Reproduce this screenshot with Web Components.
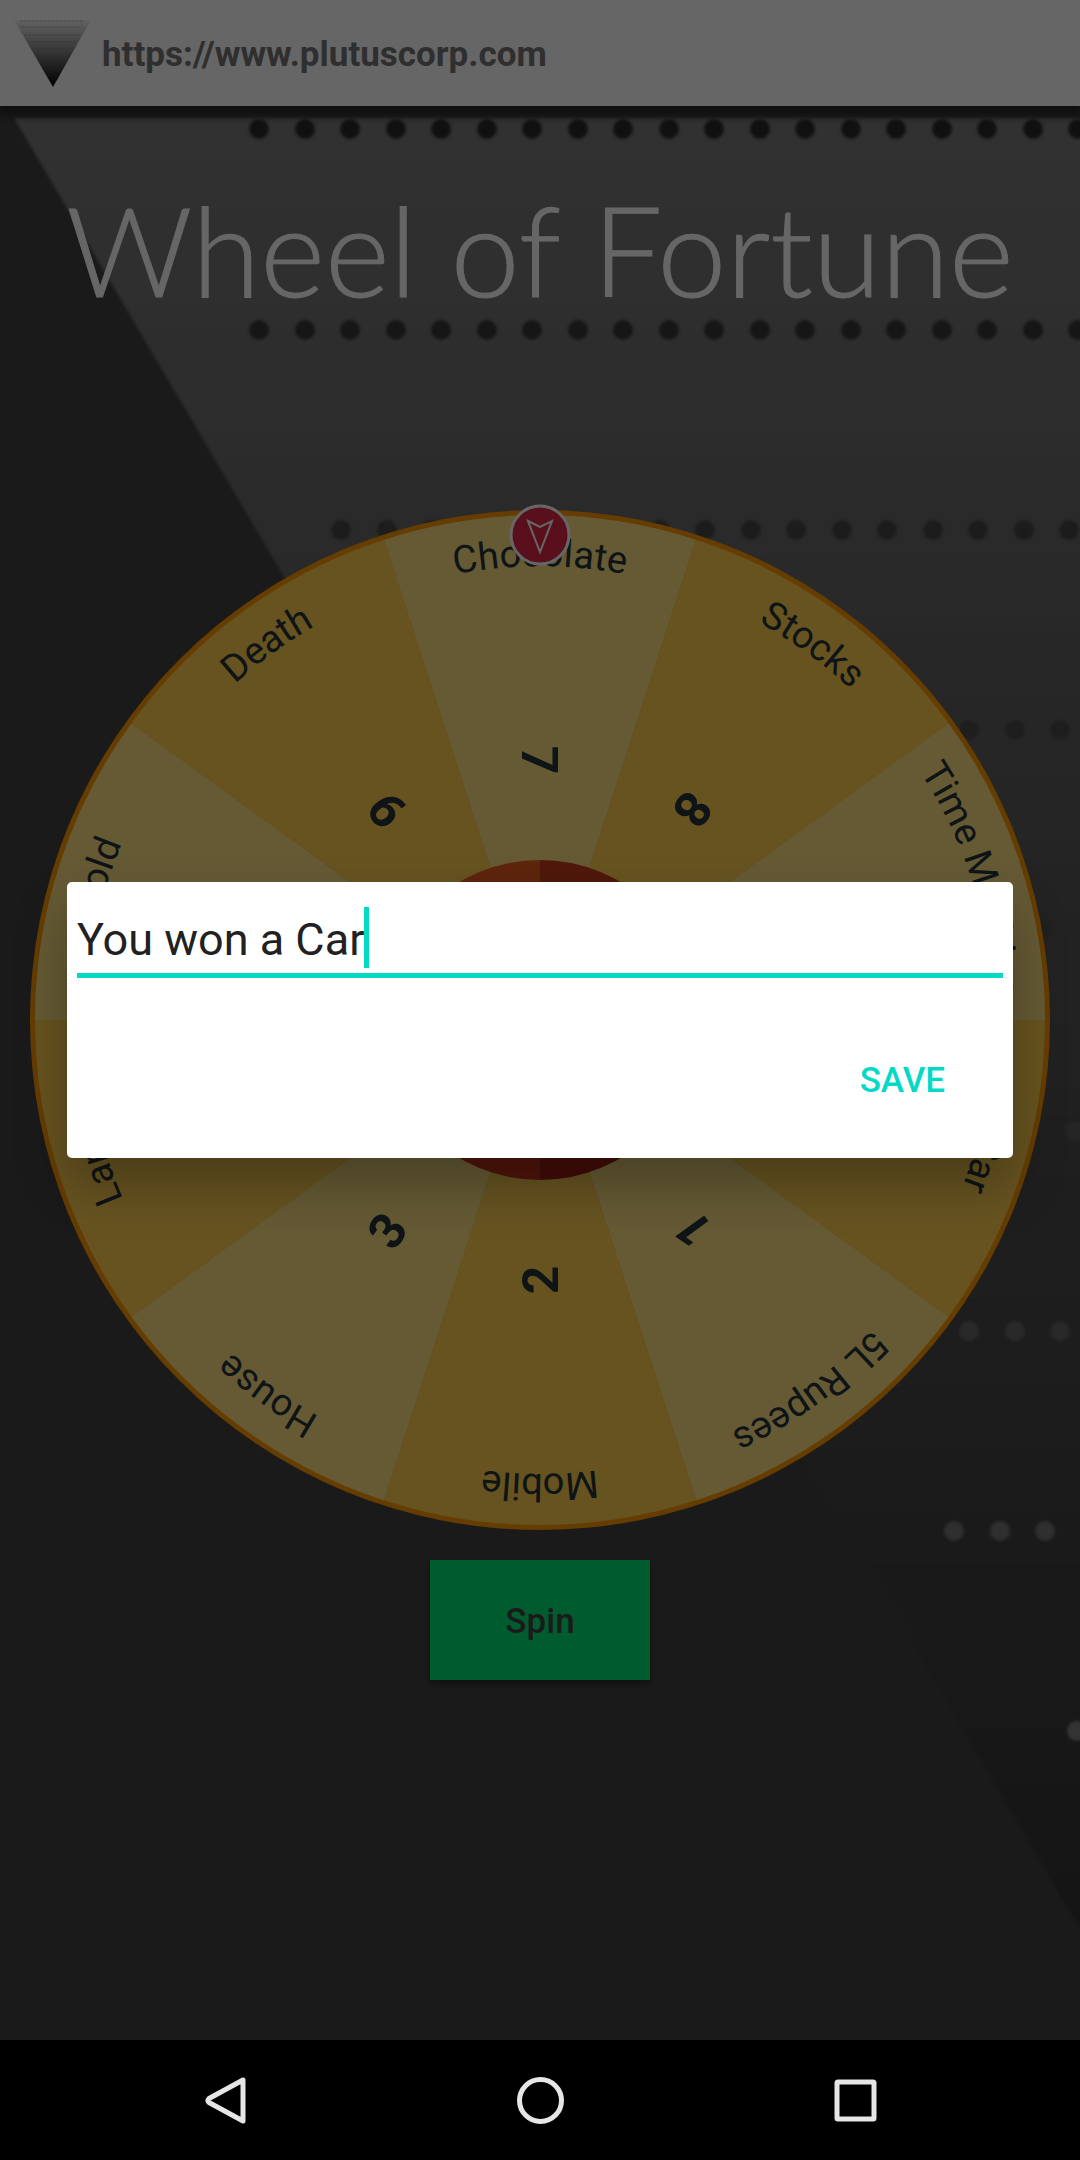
<!DOCTYPE html>
<html lang="en">
<head>
<meta charset="utf-8">
<meta name="viewport" content="width=device-width, initial-scale=1">
<title>Wheel of Fortune</title>
<style>
  body { margin: 0; background: #000; font-family: Roboto, sans-serif; color: #424242; }
</style>
</head>
<body>
<fortune-app></fortune-app>

<script>
const define = (name, html, setup) => {
  const template = document.createElement('template');
  template.innerHTML = html;
  customElements.define(name, class extends HTMLElement {
    connectedCallback() {
      if (this.shadowRoot) return;
      this.attachShadow({ mode: 'open' }).append(template.content.cloneNode(true));
      if (setup) setup(this, this.shadowRoot);
    }
  });
};

/* Top bar: logo and address */
define('address-bar', `
  <style>
    :host { display: flex; align-items: center; gap: 10px; height: 106px; padding: 0 12px; box-sizing: border-box;
            background: #fff; box-shadow: 0 6px 10px 4px rgba(0,0,0,.4); }
    svg { display: block; width: 80px; height: 70px; flex: none; }
    ::slotted(a) { padding-top: 4px; font-size: 35px; line-height: 42px; font-weight: 700; color: #757575; text-decoration: none; }
  </style>
  <svg viewBox="0 0 80 70" aria-hidden="true">
    <defs>
      <linearGradient id="fade" x1="0" y1="0" x2="0" y2="1">
        <stop offset="0" stop-color="#f4f4f4"/><stop offset=".5" stop-color="#808080"/><stop offset="1" stop-color="#000"/>
      </linearGradient>
    </defs>
    <path d="M2 2H79L41 69Z" fill="url(#fade)"/>
    <g stroke="#555" stroke-opacity=".35" stroke-width="1" stroke-dasharray="3 1">
      <path d="M8 3H71M9 9H70M12 17H68M17 24H64M21 31H61M25 38H57M29 45H53M33 52H49"/>
    </g>
  </svg>
  <slot></slot>
`);

/* Decorative backdrop: slanted sheet and rows of dots */
define('dotted-backdrop', `
  <style>
    :host { display: block; overflow: hidden; background: #424242; }
    svg { display: block; width: 100%; height: 100%; }
  </style>
  <svg viewBox="0 106 1080 1934" preserveAspectRatio="xMinYMin slice" aria-hidden="true">
    <defs>
      <linearGradient id="sheet" gradientUnits="userSpaceOnUse" x1="0" y1="118" x2="0" y2="1940">
        <stop offset="0" stop-color="#7b7b7b"/><stop offset=".2" stop-color="#6c6c6c"/>
        <stop offset=".42" stop-color="#585858"/><stop offset=".75" stop-color="#444"/><stop offset="1" stop-color="#343434"/>
      </linearGradient>
      <filter id="soft" x="-5%" y="-5%" width="110%" height="110%"><feGaussianBlur stdDeviation="1.5"/></filter>
    </defs>
    <path d="M14 118H1100V1963Z" fill="url(#sheet)" filter="url(#soft)"/>
    <g id="dots" filter="url(#soft)"></g>
  </svg>
`, (host, root) => {
  const rows = [
    [129, 259, 19, '#2c2c2c'], [330, 259, 19, '#383838'], [530, 341, 17, '#464646'],
    [730, 969, 3, '#4c4c4c'], [930, 1041, 1, '#505050'], [1131, 1075, 1, '#5c5c5c'],
    [1331, 969, 3, '#666'], [1531, 954, 3, '#747474'], [1731, 1077, 1, '#808080']
  ];
  root.getElementById('dots').innerHTML = rows.map(([y, x, count, fill]) =>
    Array.from({ length: count }, (_, i) =>
      `<circle cx="${Math.round(x + i * 45.5)}" cy="${y}" r="10" fill="${fill}"/>`).join('')).join('');
});

/* Prize wheel */
define('prize-wheel', `
  <style>
    :host { display: block; }
    svg { display: block; width: 100%; height: auto; font-family: Roboto, sans-serif; }
    text { fill: #263238; text-anchor: middle; }
    .name { font-size: 38px; }
    .number { font-size: 50px; font-weight: 700; }
  </style>
  <svg viewBox="-510 -510 1020 1020" overflow="visible" role="img" aria-label="Prize wheel">
    <defs>
      <path id="arc" d="M-454 0A454 454 0 0 1 454 0"/>
      <linearGradient id="left" x1="0" y1="0" x2="0" y2="1">
        <stop offset="0" stop-color="#ee5f22"/><stop offset="1" stop-color="#c8341c"/>
      </linearGradient>
      <linearGradient id="right" x1="0" y1="0" x2="0" y2="1">
        <stop offset="0" stop-color="#c63f1c"/><stop offset="1" stop-color="#a81f16"/>
      </linearGradient>
    </defs>
    <circle r="510" fill="#ff9800"/>
    <g id="slices"></g>
    <path d="M0 -160A160 160 0 0 0 0 160Z" fill="url(#left)"/>
    <path d="M0 -160A160 160 0 0 1 0 160Z" fill="url(#right)"/>
    <g transform="translate(0 -485)">
      <circle r="29" fill="#e12846" stroke="#fff" stroke-width="3"/>
      <path d="M-12 -14L0 -8L12 -14L0 17Z" fill="none" stroke="#fff" stroke-width="2"/>
    </g>
  </svg>
`, (host, root) => {
  const prizes = ['5L Rupees', 'Mobile', 'House', 'Land', 'Gold', 'Death', 'Chocolate', 'Stocks', 'Time Machine', 'Car'];
  const r = 505, half = Math.PI / 10;
  const x = (r * Math.sin(half)).toFixed(2), y = (-r * Math.cos(half)).toFixed(2);
  root.getElementById('slices').innerHTML = prizes.map((name, i) => {
    const angle = 54 + i * 36;
    return `<g transform="rotate(${angle + 90})">
      <path d="M0 0L${-x} ${y}A${r} ${r} 0 0 1 ${x} ${y}Z" fill="${i % 2 ? '#ffd050' : '#fce282'}"/>
      <text class="name"><textPath href="#arc" startOffset="50%">${name}</textPath></text>
      <text class="number" transform="translate(0 -260) rotate(90)" y="18">${i + 1}</text>
    </g>`;
  }).join('');
});

/* Raised button */
define('spin-button', `
  <style>
    :host { display: block; }
    button { display: block; min-width: 220px; height: 120px; border: 0; padding: 4px 40px 0; background: #00e676;
             font: 500 35px/42px Roboto, sans-serif; color: #424242; box-shadow: 0 5px 6px rgba(0,0,0,.35); }
  </style>
  <button type="button"><slot></slot></button>
`);

/* Result dialog */
define('result-dialog', `
  <style>
    :host { display: flex; flex-direction: column; box-sizing: border-box; min-height: 276px; padding: 20px 10px 32px;
            border-radius: 5px; background: #fff; box-shadow: 0 26px 52px rgba(0,0,0,.28); }
    .field { display: flex; align-items: center; height: 71px; border-bottom: 5px solid #03dac5; }
    input { field-sizing: content; min-width: 0; border: 0; padding: 4px 0 0; outline: 0; background: none;
            font: 400 45px/60px Roboto, sans-serif; color: #212121; caret-color: transparent; }
    .caret { flex: none; width: 5px; height: 61px; background: #03dac5; }
    .actions { display: flex; justify-content: flex-end; margin-top: auto; padding-right: 40px; }
    button { border: 0; padding: 0 18px; height: 90px; background: none; color: #03dac5;
             font: 500 35px/42px Roboto, sans-serif; text-transform: uppercase; }
  </style>
  <div class="field"><input id="result" type="text" aria-label="Result" value="You won a Car"><span class="caret"></span></div>
  <div class="actions"><button type="button">SAVE</button></div>
`);

/* System navigation bar */
define('system-nav', `
  <style>
    :host { display: flex; box-sizing: border-box; height: 120px; padding: 0 6.25%; background: #000; }
    button { flex: 1; display: grid; place-items: center; border: 0; padding: 0; background: none; }
    svg { display: block; width: 60px; height: 60px; fill: none; stroke: #e6e6e6; stroke-width: 5; stroke-linejoin: round; }
  </style>
  <button type="button" aria-label="Back"><svg viewBox="0 0 60 60"><path d="M48 10V51L14 32.500Q12 30.500 14 28.500Z"/></svg></button>
  <button type="button" aria-label="Home"><svg viewBox="0 0 60 60"><circle cx="30.500" cy="30.500" r="21"/></svg></button>
  <button type="button" aria-label="Recents"><svg viewBox="0 0 60 60"><rect x="12" y="12" width="37" height="37" rx="1"/></svg></button>
`);

/* Whole screen */
define('fortune-app', `
  <style>
    :host { display: flex; flex-direction: column; min-height: 100vh; }
    .window { position: relative; flex: 1; display: flex; flex-direction: column; isolation: isolate; }
    address-bar { position: relative; z-index: 1; }
    main { position: relative; flex: 1; display: flex; flex-direction: column; align-items: center; }
    dotted-backdrop { position: absolute; inset: 0; z-index: -1; }
    h1 { margin: 0; padding: 68px 0 186px; font: 300 124px/150px Lato, sans-serif; color: #fff; white-space: nowrap;
         -webkit-text-stroke: 1px #fff; }
    prize-wheel { align-self: stretch; margin: 0 30px; }
    spin-button { margin-top: 30px; }
    .scrim { position: absolute; inset: 0; z-index: 2; display: flex; align-items: center; padding: 0 67px;
             background: rgba(0,0,0,.6); }
    result-dialog { flex: 1; }
  </style>
  <div class="window">
    <address-bar><a href="https://www.plutuscorp.com">https://www.plutuscorp.com</a></address-bar>
    <main>
      <dotted-backdrop></dotted-backdrop>
      <h1>Wheel of Fortune</h1>
      <prize-wheel></prize-wheel>
      <spin-button>Spin</spin-button>
    </main>
    <div class="scrim"><result-dialog role="dialog" aria-label="Result"></result-dialog></div>
  </div>
  <system-nav></system-nav>
`);
</script>
</body>
</html>
